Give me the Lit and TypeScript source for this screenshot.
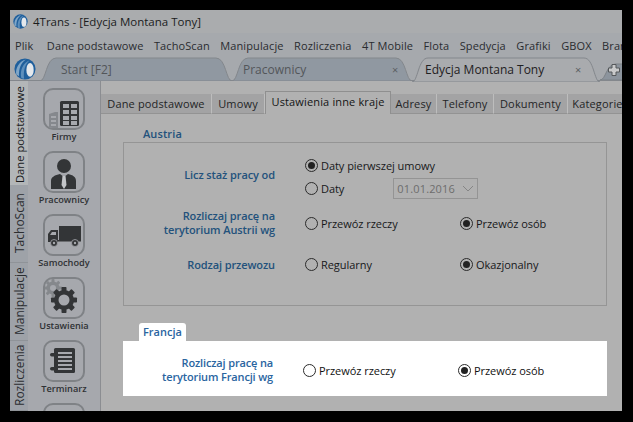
import { LitElement, html, css, svg } from "lit";
import { customElement } from "lit/decorators.js";

const L = "#a7a9ae";
const D = "#333537";

const gear = (cx: number, cy: number, r: number, body: number, hole: number, teeth: number, tw: number, c: string) => svg`
  ${Array.from({ length: teeth }, (_, i) => svg`<rect x="${cx - tw / 2}" y="${cy - r}" width="${tw}" height="${r * 2}" rx="0.800" fill="${c}" transform="rotate(${(180 / teeth) * i} ${cx} ${cy})"/>`)}
  <circle cx="${cx}" cy="${cy}" r="${body}" fill="${c}"/>
  <circle cx="${cx}" cy="${cy}" r="${hole}" fill="#a6a8ad"/>`;

const icons: Record<string, unknown> = {
  firm: svg`<path d="M4 38V24l6-2h3v16z" fill="#85888d"/>
    ${[26, 30, 34].map(y => svg`<rect x="6" y="${y}" width="5" height="2" fill="#a6a8ad"/>`)}
    <rect x="15" y="11" width="19" height="25" rx="1.500" fill="${D}"/>
    ${[14, 20, 26, 31].map(y => svg`<rect x="18" y="${y}" width="6" height="4" fill="${L}"/><rect x="26" y="${y}" width="6" height="4" fill="${L}"/>`)}`,
  person: svg`<circle cx="19" cy="13" r="7" fill="${D}"/>
    <path d="M6 36V28c0-4 4-6 9-7l4 3 4-3c5 1 8 3 8 7v8z" fill="${D}"/><path d="M17.500 23h3l1 9-2.500 4-2.500-4z" fill="#c3c5c8"/>`,
  truck: svg`<rect x="14" y="10" width="22" height="14" fill="${D}"/>
    <path d="M3 26V18l3-4h7v12z" fill="${D}"/><path d="M5 19l2-3h4v3z" fill="${L}"/>
    <rect x="3" y="24" width="33" height="1.500" fill="${D}"/>
    <circle cx="9" cy="27" r="3.500" fill="${D}" stroke="${L}" stroke-width=".8"/><circle cx="30" cy="27" r="3.500" fill="${D}" stroke="${L}" stroke-width=".8"/><circle cx="9" cy="27" r="1.200" fill="${L}"/><circle cx="30" cy="27" r="1.200" fill="${L}"/>`,
  gears: svg`${gear(8, 9, 9, 6.500, 3, 4, 3, "#85888c")}${gear(19, 21, 13, 10, 5.500, 4, 5, D)}`,
  note: svg`<rect x="9" y="6" width="21" height="25" rx="1.500" fill="${D}"/>
    ${[10, 14, 18, 22, 26].map(y => svg`<rect x="13" y="${y}" width="14" height="2" fill="${L}"/>`)}
    <rect x="5" y="11" width="7" height="3.500" rx="1.700" fill="${D}"/><rect x="5" y="25" width="7" height="3.500" rx="1.700" fill="${D}"/>`,
};

const logo = (s: number) => html`<svg width=${s} height=${s} viewBox="0 0 24 24">
  <circle cx="12" cy="12" r="11.500" fill="#1f5f9c"/>
  <path d="M2.500 18C1 11 6 3 13 1.500 8 5 5 11 5.500 20z" fill="#7fa6c8"/>
  <path d="M8 22C6 14 10 5 17 2.500 12 7 10 14 11 22.500z" fill="#5d8fbc"/>
  <ellipse cx="17.500" cy="13" rx="4" ry="7.500" fill="#e4e8ec"/>
</svg>`;

@customElement("app-root")
export class AppRoot extends LitElement {
  static styles = css`
    :host { display: block; width: 633px; height: 422px; background: #000; padding: 10px 11px 11px 10px; box-sizing: border-box;
      font-family: "Open Sans", "Noto Sans", sans-serif; font-size: 11px; color: #17181a; overflow: hidden; }
    .win { height: 100%; display: flex; flex-direction: column; background: #b1b1b1; overflow: hidden; }
    .title { height: 23px; flex: none; background: #aaacae; display: flex; align-items: center; gap: 5px; padding-left: 3px; font-size: 11.500px; color: #1b1c1d; }
    .menu { height: 24px; flex: none; background: #a6a9ad; display: flex; align-items: center; gap: 10.500px; padding-left: 5px; color: #2a2c30; white-space: nowrap; overflow: hidden; letter-spacing: .1px; }
    .menu .p { margin-right: 3px; }
    .strip { height: 24px; flex: none; background: #a6a9ad; display: flex; align-items: stretch; border-bottom: 1px solid #83878c; box-sizing: border-box; position: relative; }
    .strip .lg { width: 30px; flex: none; padding: 0 0 0 4px; box-sizing: border-box; display: flex; align-items: center; }
    .tab { position: relative; height: 24px; flex: none; display: flex; align-items: center; color: #53565a; font-size: 12px; }
    .tab > svg { position: absolute; inset: 0; }
    .tab span { position: relative; }
    .tab i { position: absolute; font-style: normal; font-size: 11px; color: #5c5f63; top: 5px; }
    .tab.on { color: #1f2022; height: 25px; z-index: 1; }
    .t1 { width: 192px; padding-left: 21px; box-sizing: border-box; }
    .t2 { width: 180px; padding-left: 11px; box-sizing: border-box; }
    .t2 i { left: 160px; }
    .t3 { width: 188px; padding-left: 13px; box-sizing: border-box; }
    .t3 i { left: 163px; }
    .t4 { width: 22px; margin-top: 6px; height: 17px; overflow: hidden; }
    .tab > svg.plus { position: absolute; left: 8px; top: 1px; inset-inline-end: auto; }
    .body { flex: 1; display: flex; min-height: 0; }
    .vt { width: 18px; flex: none; background: #9ea2a8; display: flex; flex-direction: column; overflow: hidden; }
    .vt div { writing-mode: vertical-rl; transform: rotate(180deg); width: 18px; flex: none; display: flex; align-items: center; justify-content: center; box-sizing: border-box; color: #2c2e31; font-size: 12px; border-top: 1px solid #8f9398; white-space: nowrap; }
    .vt .on { height: 104px; background: #b3b6b8; color: #1a1b1d; border: 0; justify-content: flex-start; padding-top: 2px; font-size: 11.200px; }
    .vt .v2, .vt .v3 { height: 78px; }
    .vt .v4 { height: 70px; }
    .side { width: 72px; flex: none; background: #a6a8ad; border-right: 1px solid #8b8d91; padding-top: 7px; overflow: hidden; display: flex; flex-direction: column; align-items: center; }
    .it { flex: none; height: 63px; display: flex; flex-direction: column; align-items: center; color: #2f3134; font-size: 9.200px; font-weight: 600; }
    .box { width: 42px; height: 42px; box-sizing: border-box; border: 2px solid #7f8286; border-radius: 10px; flex: none; overflow: hidden; }
    .box svg { display: block; }
    .it span { line-height: 13px; }
    .main { flex: 1; min-width: 0; display: flex; flex-direction: column; overflow: hidden; }
    .subs { flex: none; height: 33px; display: flex; align-items: flex-end; padding-bottom: 1px; box-sizing: border-box; white-space: nowrap; letter-spacing: .15px; overflow: hidden; }
    .sub { height: 20px; flex: none; background: #a3a3a4; border-right: 1px solid #bdbdbd; border-bottom: 1px solid #939393; box-sizing: border-box; display: flex; align-items: center; justify-content: center; color: #242526; margin-bottom: -1px; }
    .sub.on { height: 23px; background: #b1b1b1; border: 1px solid #8f8f8f; border-bottom: 0; color: #131415; padding-bottom: 3px; }
    .c { flex: 1; padding: 10px 15px 0 22px; }
    .h { color: #23527c; font-weight: 600; padding-left: 20px; height: 18px; line-height: 19px; letter-spacing: .1px; }
    .fs { border: 1px solid #959595; height: 164px; box-sizing: border-box; display: grid; grid-template-columns: 151px 155px 1fr; grid-auto-rows: min-content; padding-top: 11px; align-items: center; }
    .lab { color: #23527c; font-weight: 600; text-align: right; line-height: 14px; letter-spacing: -.1px; }
    .lab.first { margin-bottom: 4px; }
    .r { display: flex; align-items: center; gap: 3px; padding-left: 30px; height: 23px; white-space: nowrap; letter-spacing: -.05px; }
    .rad { width: 13px; height: 13px; border: 1px solid #2b2b2b; border-radius: 50%; box-sizing: border-box; flex: none; display: flex; align-items: center; justify-content: center; }
    .rad.on::after { content: ""; width: 7px; height: 7px; border-radius: 50%; background: #222; }
    .stack { display: flex; flex-direction: column; grid-column: 2 / 4; }
    .row2 { display: flex; align-items: center; }
    .date { width: 85px; height: 21px; margin-left: 49px; border: 1px solid #949494; box-sizing: border-box; display: flex; align-items: center; justify-content: space-between; padding: 0 3px 0 3px; color: #6d6d6d; letter-spacing: .15px; }
    .gap1 { margin-top: 9px; }
    .gap2 { margin-top: 16px; }
    .pill { display: block; width: fit-content; margin: 17px 0 0 16px; height: 18px; line-height: 18px; background: #fff; border-radius: 3px 3px 0 0; padding: 0 4px; color: #2a659f; font-weight: 600; }
    .spot { background: #fff; height: 55px; display: grid; grid-template-columns: 150px 155px 1fr; align-items: center; color: #111; }
    .spot .lab { color: #2a659f; padding-top: 2px; letter-spacing: -.15px; }
    .spot .r { padding-top: 4px; }
  `;

  render() {
    const menu = ["Dane podstawowe", "TachoScan", "Manipulacje", "Rozliczenia", "4T Mobile", "Flota", "Spedycja", "Grafiki", "GBOX", "Branże"];
    const side: [string, string][] = [["Firmy", "firm"], ["Pracownicy", "person"], ["Samochody", "truck"], ["Ustawienia", "gears"], ["Terminarz", "note"], ["", ""]];
    const subs: [string, number, boolean?][] = [["Dane podstawowe", 111], ["Umowy", 53], ["Ustawienia inne kraje", 126, true], ["Adresy", 46], ["Telefony", 57], ["Dokumenty", 74], ["Kategorie", 60]];
    const tabPath = (w: number, h: number, fill: string, stroke: string) => html`<svg width=${w} height=${h} viewBox="0 0 ${w} ${h}"><path d="M0 ${h}C6 ${h} 6 1 16 1H${w - 16}C${w - 6} 1 ${w - 6} ${h} ${w} ${h}Z" fill=${fill} stroke=${stroke}/></svg>`;
    return html`<div class="win">
      <div class="title">${logo(15)}<span>4Trans - [Edycja Montana Tony]</span></div>
      <div class="menu"><span class="p">Plik</span>${menu.map(m => html`<span>${m}</span>`)}</div>
      <div class="strip">
        <div class="lg">${logo(22)}</div>
        <div class="tab t1">${tabPath(192, 24, "#9098a1", "#83878c")}<span>Start [F2]</span></div>
        <div class="tab t2">${tabPath(180, 24, "#9098a1", "#83878c")}<span>Pracownicy</span><i>×</i></div>
        <div class="tab t3 on">${tabPath(188, 25, "#a9abae", "#83878c")}<span>Edycja Montana Tony</span><i>×</i></div>
        <div class="tab t4">${tabPath(50, 17, "#8c949d", "#7d8287")}
          <svg class="plus" width="12" height="12" viewBox="0 0 12 12"><path d="M4 .5h4v3.500h3.500v4H8v3.500H4V8H.5V4H4z" fill="#c9cacb" stroke="#55585b"/></svg></div>
      </div>
      <div class="body">
        <div class="vt">
          <div class="on">Dane podstawowe</div>
          <div class="v2">TachoScan</div>
          <div class="v3">Manipulacje</div>
          <div class="v4">Rozliczenia</div>
        </div>
        <div class="side">
          ${side.map(([n, k]) => html`<div class="it"><div class="box"><svg width="38" height="38" viewBox="0 0 38 38">${icons[k]}</svg></div><span>${n}</span></div>`)}
        </div>
        <div class="main">
          <div class="subs">${subs.map(([n, w, on]) => html`<div class="sub ${on ? "on" : ""}" style="width:${w}px">${n}</div>`)}</div>
          <div class="c">
            <div class="h">Austria</div>
            <div class="fs">
              <div class="lab first">Licz staż pracy od</div>
              <div class="stack">
                <div class="r"><span class="rad on"></span>Daty pierwszej umowy</div>
                <div class="row2"><div class="r"><span class="rad"></span>Daty</div><div class="date">01.01.2016
                  <svg width="12" height="7" viewBox="0 0 12 7"><path d="M1 1l5 5 5-5" fill="none" stroke="#858585"/></svg></div></div>
              </div>
              <div class="lab gap1">Rozliczaj pracę na<br>terytorium Austrii wg</div>
              <div class="r gap1"><span class="rad"></span>Przewóz rzeczy</div>
              <div class="r gap1"><span class="rad on"></span>Przewóz osób</div>
              <div class="lab gap2">Rodzaj przewozu</div>
              <div class="r gap2"><span class="rad"></span>Regularny</div>
              <div class="r gap2"><span class="rad on"></span>Okazjonalny</div>
            </div>
            <span class="pill">Francja</span>
            <div class="spot">
              <div class="lab">Rozliczaj pracę na<br>terytorium Francji wg</div>
              <div class="r"><span class="rad"></span>Przewóz rzeczy</div>
              <div class="r"><span class="rad on"></span>Przewóz osób</div>
            </div>
          </div>
        </div>
      </div>
    </div>`;
  }
}
